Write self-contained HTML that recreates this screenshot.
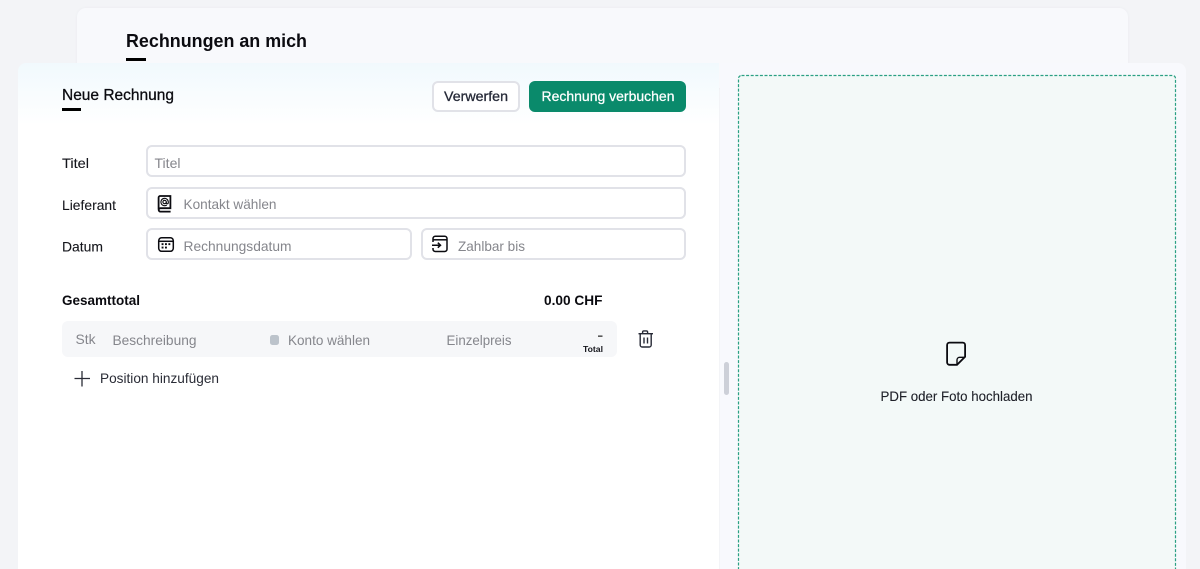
<!DOCTYPE html>
<html lang="de">
<head>
<meta charset="utf-8">
<title>Neue Rechnung</title>
<style>
html,body{margin:0;padding:0;width:1200px;height:569px;overflow:hidden;background:#f3f4f7;}
#page{position:relative;width:1200px;height:569px;overflow:hidden;background:#f3f4f7;}
.b{position:absolute;box-sizing:border-box;}
svg{position:absolute;left:0;top:0;}
text{font-family:"Liberation Sans",sans-serif;}
.input{background:#fff;border:2px solid #e1e2e8;border-radius:6px;}
</style>
</head>
<body>
<div id="page">
<div class="b" style="left:77px;top:8px;width:1051px;height:80px;background:#f8f9fc;border-radius:9px;box-shadow:0 0 3px rgba(30,40,80,.04)"></div>
<div class="b" style="left:126px;top:58px;width:20px;height:2.5px;background:#000"></div>
<div class="b" style="left:720px;top:63px;width:466px;height:506px;background:#f8f9fd;border-radius:0 8px 0 0;"></div>
<div class="b" style="left:18px;top:63px;width:701px;height:506px;border-radius:8px 0 0 0;background:linear-gradient(#f1f9fd 0,#fff 62px,#fff 100%)"></div>
<div class="b" style="left:62px;top:108px;width:19px;height:2.5px;background:#000"></div>
<div class="b" style="left:432px;top:81px;width:88px;height:31px;background:#fff;border:2px solid #e1e2e8;border-radius:6px"></div>
<div class="b" style="left:529px;top:81px;width:157px;height:31px;background:#0a8a6b;border-radius:6px"></div>
<div class="b input" style="left:146px;top:145px;width:540px;height:32px"></div>
<div class="b input" style="left:146px;top:187px;width:540px;height:32px"></div>
<div class="b input" style="left:146px;top:228px;width:266px;height:32px"></div>
<div class="b input" style="left:421px;top:228px;width:265px;height:32px"></div>
<div class="b" style="left:62px;top:321px;width:555px;height:36px;background:#f6f7f9;border-radius:6px"></div>
<div class="b" style="left:270px;top:335px;width:9px;height:10px;background:#bcc3cb;border-radius:2.5px"></div>
<div class="b" style="left:724px;top:362px;width:5px;height:33px;background:#cdd0d8;border-radius:3px"></div>

<svg width="1200" height="569" viewBox="0 0 1200 569">
<rect x="738.5" y="75.5" width="437" height="520" rx="3" fill="#f3f9f8" stroke="#2ba083" stroke-width="1.2" stroke-dasharray="3 1.6"/>
<text x="126" y="47" font-size="18" font-weight="700" fill="#0b0b10" textLength="181" lengthAdjust="spacingAndGlyphs">Rechnungen an mich</text>
<text x="62" y="100" font-size="16" fill="#0b0b10" stroke="#0b0b10" stroke-width=".3" textLength="112" lengthAdjust="spacingAndGlyphs">Neue Rechnung</text>
<text x="444" y="101" font-size="14" fill="#262a38" stroke="#262a38" stroke-width=".3" textLength="64" lengthAdjust="spacingAndGlyphs">Verwerfen</text>
<text x="541.5" y="101" font-size="14" fill="#fff" stroke="#fff" stroke-width=".25" textLength="133" lengthAdjust="spacingAndGlyphs">Rechnung verbuchen</text>
<text x="62" y="168" font-size="14" fill="#15161c" stroke="#15161c" stroke-width=".1" textLength="27" lengthAdjust="spacingAndGlyphs">Titel</text>
<text x="62" y="210" font-size="14" fill="#15161c" stroke="#15161c" stroke-width=".1" textLength="54" lengthAdjust="spacingAndGlyphs">Lieferant</text>
<text x="62" y="251.5" font-size="14" fill="#15161c" stroke="#15161c" stroke-width=".1" textLength="41" lengthAdjust="spacingAndGlyphs">Datum</text>
<text x="154.5" y="168" font-size="14" fill="#85868c" textLength="26" lengthAdjust="spacingAndGlyphs">Titel</text>
<text x="183.5" y="209" font-size="14" fill="#85868c" textLength="93" lengthAdjust="spacingAndGlyphs">Kontakt wählen</text>
<text x="183.5" y="251" font-size="14" fill="#85868c" textLength="108" lengthAdjust="spacingAndGlyphs">Rechnungsdatum</text>
<text x="458" y="251" font-size="14" fill="#85868c" textLength="67" lengthAdjust="spacingAndGlyphs">Zahlbar bis</text>
<text x="62" y="305" font-size="13.5" font-weight="700" fill="#0b0b10" textLength="78" lengthAdjust="spacingAndGlyphs">Gesamttotal</text>
<text x="544" y="305" font-size="14" font-weight="700" fill="#0b0b10" textLength="58.5" lengthAdjust="spacingAndGlyphs">0.00 CHF</text>
<text x="75.5" y="344" font-size="14" fill="#85868c" textLength="20" lengthAdjust="spacingAndGlyphs">Stk</text>
<text x="112.5" y="345" font-size="14" fill="#85868c" textLength="84" lengthAdjust="spacingAndGlyphs">Beschreibung</text>
<text x="288" y="345" font-size="14" fill="#85868c" textLength="82" lengthAdjust="spacingAndGlyphs">Konto wählen</text>
<text x="446.5" y="345" font-size="14" fill="#85868c" textLength="65" lengthAdjust="spacingAndGlyphs">Einzelpreis</text>
<text x="583" y="352" font-size="8.5" font-weight="700" fill="#15161c" textLength="20" lengthAdjust="spacingAndGlyphs">Total</text>
<text x="100" y="383" font-size="14" fill="#2a2c36" textLength="119" lengthAdjust="spacingAndGlyphs">Position hinzufügen</text>
<text x="880.5" y="401" font-size="14" fill="#1e2028" stroke="#1e2028" stroke-width=".1" textLength="152" lengthAdjust="spacingAndGlyphs">PDF oder Foto hochladen</text>
<rect x="598" y="335.5" width="4.5" height="1.3" fill="#333"/>

<!-- address book icon -->
<g fill="none" stroke="#0b0b10">
<path d="M158.6 209.5V197.6a1.6 1.6 0 0 1 1.6-1.6h10.2v12.2h-10a1.6 1.6 0 0 0 0 3.4h10.2" stroke-width="1.8"/>
<circle cx="164.6" cy="202" r="1.7" stroke-width="1.1"/>
<path d="M166.3 202v.8a1 1 0 0 0 2 0V202a3.7 3.7 0 1 0-1.5 3" stroke-width="1.1"/>
</g>
<!-- calendar icon -->
<g fill="none" stroke="#0b0b10" stroke-width="1.5">
<rect x="158.7" y="237.7" width="14.6" height="13.6" rx="3"/>
<path d="M159 241.3h14"/>
</g>
<g fill="#0b0b10">
<rect x="161.6" y="243.2" width="1.9" height="1.9"/><rect x="165" y="243.2" width="1.9" height="1.9"/><rect x="168.4" y="243.2" width="1.9" height="1.9"/>
<rect x="161.6" y="246.6" width="1.9" height="1.9"/><rect x="165" y="246.6" width="1.9" height="1.9"/>
</g>
<!-- due icon -->
<g fill="none" stroke="#0b0b10" stroke-width="1.5">
<path d="M433 242v-3.5a2.3 2.3 0 0 1 2.3-2.3h9.4a2.3 2.3 0 0 1 2.3 2.3v10.7a2.3 2.3 0 0 1-2.3 2.3h-9.4a2.3 2.3 0 0 1-2.3-2.3V248"/>
<path d="M433.2 239.8h13.6"/>
<path d="M432 245.2h8.5M437.8 242.7l2.7 2.5-2.7 2.5"/>
</g>
<!-- trash icon -->
<g fill="none" stroke="#272a36" stroke-width="1.4">
<path d="M638.5 333.7h14.5"/>
<path d="M642.6 333.5v-1.4a1.2 1.2 0 0 1 1.2-1.2h2.6a1.2 1.2 0 0 1 1.2 1.2v1.4"/>
<path d="M640.2 334v11a2 2 0 0 0 2 2h7a2 2 0 0 0 2-2v-11"/>
<path d="M644 337.5v6M647.5 337.5v6"/>
</g>
<!-- plus -->
<path d="M74.5 378.5h15.5M82 371v15.5" stroke="#2a2c36" stroke-width="1.3" fill="none"/>
<!-- file icon -->
<g fill="none" stroke="#0b0b10" stroke-width="1.8">
<path d="M957 364.8h-7.5a2.4 2.4 0 0 1-2.4-2.4v-17.4a2.4 2.4 0 0 1 2.4-2.4h13.2a2.4 2.4 0 0 1 2.4 2.4v11.8z"/>
<path d="M957 364.5v-4.6a2.6 2.6 0 0 1 2.6-2.6h5.4" stroke-width="1.4"/>
</g>
</svg>
</div>
</body>
</html>
